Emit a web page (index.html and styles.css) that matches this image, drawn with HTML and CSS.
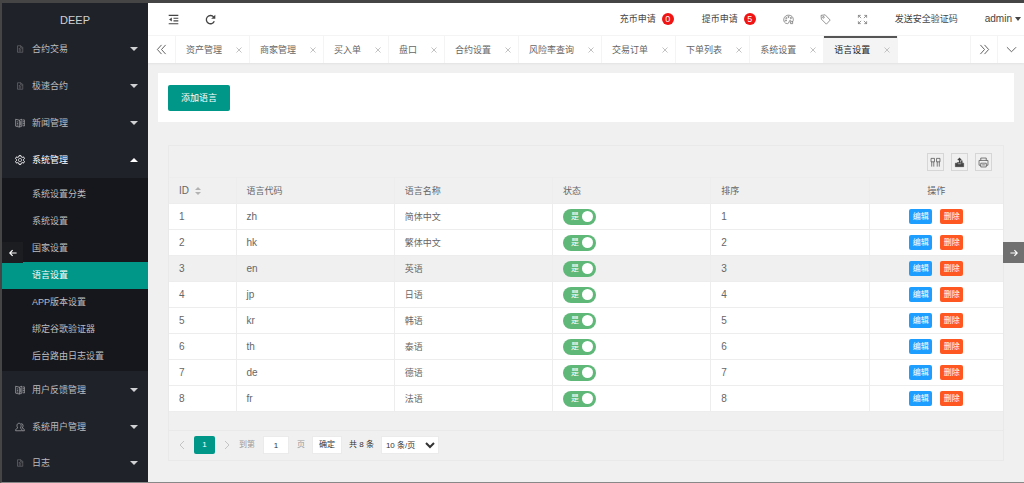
FILE: index.html
```
<!DOCTYPE html>
<html lang="zh-CN">
<head>
<meta charset="utf-8">
<title>DEEP</title>
<link rel="stylesheet" href="styles.css">
</head>
<body>
<svg class="defs" aria-hidden="true">
  <symbol id="i-file" viewBox="0 0 16 16"><path d="M3 1.500h7l3.500 3.500v9.500h-10.500zM9.500 2v4h4M5.500 7h3M5.500 9.500h5M5.500 12h5"/></symbol>
  <symbol id="i-book" viewBox="0 0 16 16"><path d="M1 2l6 1.500v11l-6-1.500zM7 3.500l4-1.500v11l-4 1.500M3 6l2 .5M3 8.500l2 .5M3 11l2 .5M9 5v7M12.500 3h2.500M12.500 6h2.500M12.500 9h2.500M12.500 12.500h2.500M15 3v10"/></symbol>
  <symbol id="i-gear" viewBox="0 0 16 16"><path stroke-width="1.500" d="M6.500 1h3l.5 2 1.700.8 1.900-.8 1.500 2.500-1.400 1.500v2l1.400 1.500-1.500 2.500-1.900-.8-1.700.8-.5 2h-3l-.5-2-1.700-.8-1.900.8-1.500-2.500 1.400-1.500v-2l-1.400-1.500 1.500-2.500 1.900.8 1.700-.8z"/><circle cx="8" cy="8" r="2.600"/></symbol>
  <symbol id="i-user" viewBox="0 0 16 16"><path d="M1 14h9.500M1 14c0-3 1.500-3.500 3.500-4.500-2-2-2-7.500 2-7.500s4 5.500 2 7.500M10 2.500c3.500 0 3.500 5 1.500 7 2 .7 3.500 1.500 3.500 4.500h-4M8.500 9.500c1.500.7 2.500 2 2.500 4.500"/></symbol>
  <symbol id="i-close" viewBox="0 0 10 10"><path d="M2.500 2.500l5 5M7.500 2.500l-5 5"/></symbol>
</svg>

<div class="app">
  <aside class="side">
    <div class="logo">DEEP</div>
    <nav>
      <a class="nav-item" href="#"><svg class="dim"><use href="#i-file"/></svg><span>合约交易</span><i class="caret"></i></a>
      <a class="nav-item" href="#"><svg class="dim"><use href="#i-file"/></svg><span>极速合约</span><i class="caret"></i></a>
      <a class="nav-item" href="#"><svg><use href="#i-book"/></svg><span>新闻管理</span><i class="caret"></i></a>
      <a class="nav-item open" href="#"><svg><use href="#i-gear"/></svg><span>系统管理</span><i class="caret up"></i></a>
      <div class="submenu">
        <a href="#">系统设置分类</a>
        <a href="#">系统设置</a>
        <a href="#">国家设置</a>
        <a href="#" class="current">语言设置</a>
        <a href="#">APP版本设置</a>
        <a href="#">绑定谷歌验证器</a>
        <a href="#">后台路由日志设置</a>
      </div>
      <a class="nav-item" href="#"><svg><use href="#i-book"/></svg><span>用户反馈管理</span><i class="caret"></i></a>
      <a class="nav-item" href="#"><svg><use href="#i-user"/></svg><span>系统用户管理</span><i class="caret"></i></a>
      <a class="nav-item" href="#"><svg class="dim"><use href="#i-file"/></svg><span>日志</span><i class="caret"></i></a>
    </nav>
  </aside>

  <div class="main">
    <header class="topbar">
      <button class="icon-btn" aria-label="收起菜单"><svg viewBox="0 0 16 16"><path d="M1 2h14M8 6.200h7M8 10h7M1 14.200h14" stroke-width="1.700"/><path d="M5.500 5v6L1.500 8z" fill="currentColor" stroke="none"/></svg></button>
      <button class="icon-btn" aria-label="刷新"><svg viewBox="0 0 16 16"><path d="M13.500 10.500a6 6 0 1 1-.8-6" stroke-width="1.900"/><path d="M15 1v6h-6z" fill="currentColor" stroke="none"/></svg></button>
      <span class="spacer"></span>
      <a class="top-link" href="#">充币申请<span class="badge">0</span></a>
      <a class="top-link" href="#">提币申请<span class="badge">5</span></a>
      <button class="icon-btn thin" aria-label="主题"><svg viewBox="0 0 16 16"><path d="M6.500 14C2 14 .5 10 1.200 7 2 3.500 5 1.500 8.500 1.700c4 .2 6.500 3 6.500 6.300 0 2-1 3.500-2 3.500-1.500 0-1-2.500-2.500-2.500-2 0-1 5-4 5z"/><path d="M11 10.500v3.500h3v-3.500"/><circle cx="4.200" cy="9.500" r=".9"/><circle cx="4.800" cy="6" r=".9"/><circle cx="8" cy="4.300" r=".9"/><circle cx="11.500" cy="5.800" r=".9"/></svg></button>
      <button class="icon-btn thin" aria-label="便签"><svg viewBox="0 0 16 16"><path d="M1.500 2l6-.8 7.300 7.600-5.500 6-7.300-7.300z"/><circle cx="5" cy="4.800" r="1.200"/></svg></button>
      <button class="icon-btn thin" aria-label="全屏"><svg viewBox="0 0 16 16"><path d="M2 5.500v-3.500h3.500M2 2l4 4M10.500 2h3.500v3.500M14 2l-4 4M2 10.500v3.500h3.500M2 14l4-4M14 10.500v3.500h-3.500M14 14l-4-4"/></svg></button>
      <a class="top-link" href="#">发送安全验证码</a>
      <a class="top-link user" href="#">admin<i class="caret"></i></a>
    </header>

    <div class="tabbar">
      <button class="tab-ctl first" aria-label="向左"><svg viewBox="0 0 12 12"><path d="M6 1L1.500 6 6 11M10.500 1L6 6l4.500 5"/></svg></button>
      <div class="tabs">
        <div class="tab"><a href="#">资产管理</a><button aria-label="关闭"><svg><use href="#i-close"/></svg></button></div>
        <div class="tab"><a href="#">商家管理</a><button aria-label="关闭"><svg><use href="#i-close"/></svg></button></div>
        <div class="tab"><a href="#">买入单</a><button aria-label="关闭"><svg><use href="#i-close"/></svg></button></div>
        <div class="tab"><a href="#">盘口</a><button aria-label="关闭"><svg><use href="#i-close"/></svg></button></div>
        <div class="tab"><a href="#">合约设置</a><button aria-label="关闭"><svg><use href="#i-close"/></svg></button></div>
        <div class="tab"><a href="#">风险率查询</a><button aria-label="关闭"><svg><use href="#i-close"/></svg></button></div>
        <div class="tab"><a href="#">交易订单</a><button aria-label="关闭"><svg><use href="#i-close"/></svg></button></div>
        <div class="tab"><a href="#">下单列表</a><button aria-label="关闭"><svg><use href="#i-close"/></svg></button></div>
        <div class="tab"><a href="#">系统设置</a><button aria-label="关闭"><svg><use href="#i-close"/></svg></button></div>
        <div class="tab active"><a href="#">语言设置</a><button aria-label="关闭"><svg><use href="#i-close"/></svg></button></div>
      </div>
      <button class="tab-ctl" aria-label="向右"><svg viewBox="0 0 12 12"><path d="M1.500 1L6 6l-4.500 5M6 1l4.500 5L6 11"/></svg></button>
      <button class="tab-ctl" aria-label="更多"><svg viewBox="0 0 12 12"><path d="M1 3.500L6 8.500l5-5"/></svg></button>
    </div>

    <main class="content">
      <section class="card"><button class="primary">添加语言</button></section>

      <section class="grid-box">
        <div class="tools">
          <button aria-label="筛选列"><svg viewBox="0 0 16 16"><path d="M1.500 2h5v5h-5zM9.500 2h5v5h-5zM2.500 7v7M5.500 7v7M10.500 7v7M13.500 7v7"/></svg></button>
          <button aria-label="导出"><svg viewBox="0 0 16 16"><path d="M2 9h3l1 1.500h4L11 9h3v5H2z" fill="currentColor"/><path d="M4.500 8.500h7V6H9.500M8 8V2.500M5.500 4.500L8 2l2.500 2.500" stroke-width="1.700"/></svg></button>
          <button aria-label="打印"><svg viewBox="0 0 16 16"><path d="M4 5V1.500h8V5M4 12H1.500V5h13v7H12M4 9h8v5.500H4zM6 11.500h4"/></svg></button>
        </div>
        <table>
          <colgroup><col class="c-id"><col><col><col><col><col class="c-op"></colgroup>
          <thead>
            <tr><th><span class="sortable">ID<span class="sort"><i class="caret up"></i><i class="caret"></i></span></span></th><th>语言代码</th><th>语言名称</th><th>状态</th><th>排序</th><th class="op">操作</th></tr>
          </thead>
          <tbody>
            <tr><td>1</td><td>zh</td><td>简体中文</td><td><label class="switch">是<input type="checkbox" checked></label></td><td>1</td><td class="op"><button class="mini">编辑</button><button class="mini del">删除</button></td></tr>
            <tr><td>2</td><td>hk</td><td>繁体中文</td><td><label class="switch">是<input type="checkbox" checked></label></td><td>2</td><td class="op"><button class="mini">编辑</button><button class="mini del">删除</button></td></tr>
            <tr class="hover"><td>3</td><td>en</td><td>英语</td><td><label class="switch">是<input type="checkbox" checked></label></td><td>3</td><td class="op"><button class="mini">编辑</button><button class="mini del">删除</button></td></tr>
            <tr><td>4</td><td>jp</td><td>日语</td><td><label class="switch">是<input type="checkbox" checked></label></td><td>4</td><td class="op"><button class="mini">编辑</button><button class="mini del">删除</button></td></tr>
            <tr><td>5</td><td>kr</td><td>韩语</td><td><label class="switch">是<input type="checkbox" checked></label></td><td>5</td><td class="op"><button class="mini">编辑</button><button class="mini del">删除</button></td></tr>
            <tr><td>6</td><td>th</td><td>泰语</td><td><label class="switch">是<input type="checkbox" checked></label></td><td>6</td><td class="op"><button class="mini">编辑</button><button class="mini del">删除</button></td></tr>
            <tr><td>7</td><td>de</td><td>德语</td><td><label class="switch">是<input type="checkbox" checked></label></td><td>7</td><td class="op"><button class="mini">编辑</button><button class="mini del">删除</button></td></tr>
            <tr><td>8</td><td>fr</td><td>法语</td><td><label class="switch">是<input type="checkbox" checked></label></td><td>8</td><td class="op"><button class="mini">编辑</button><button class="mini del">删除</button></td></tr>
          </tbody>
        </table>
        <div class="pager">
          <button class="step" aria-label="上一页"><svg viewBox="0 0 10 10"><path d="M7 1L3 5l4 4"/></svg></button>
          <button class="page">1</button>
          <button class="step" aria-label="下一页"><svg viewBox="0 0 10 10"><path d="M3 1l4 4-4 4"/></svg></button>
          <label class="jump">到第<input type="text" value="1">页</label>
          <button class="confirm">确定</button>
          <span class="total">共 8 条</span>
          <select aria-label="每页条数"><option>10 条/页</option></select>
        </div>
      </section>
    </main>
  </div>

  <button class="edge prev" aria-label="后退"><svg viewBox="0 0 10 10"><path d="M9.500 5H1M4.500 1.500L1 5l3.500 3.500"/></svg></button>
  <button class="edge next" aria-label="前进"><svg viewBox="0 0 10 10"><path d="M.5 5H9M5.500 1.500L9 5 5.500 8.500"/></svg></button>
</div>
</body>
</html>
```

FILE: styles.css
```
* { box-sizing: border-box; }

body {
  margin: 0;
  background: #f0f0f0;
  color: #666;
  font: 9px/14px "Liberation Sans", "Noto Sans CJK SC", sans-serif;
}

a { color: inherit; text-decoration: none; }

button, input, select {
  margin: 0;
  padding: 0;
  border: 0;
  background: none;
  color: inherit;
  font: inherit;
}

svg {
  display: block;
  flex: none;
  fill: none;
  stroke: currentColor;
}

.defs { position: absolute; width: 0; height: 0; }

.app {
  position: relative;
  display: flex;
  min-height: 100vh;
  border: solid #454545;
  border-width: 3px 0 1px 2px;
  border-bottom-color: #888;
}

.caret {
  flex: none;
  border: 4px solid transparent;
  border-top-color: currentColor;
  border-bottom: 0;
}

.caret.up {
  border-top: 0;
  border-bottom: 4px solid currentColor;
}

/* sidebar */
.side {
  position: relative;
  z-index: 1;
  flex: none;
  width: 146px;
  background: #20222a;
  color: #bcbdbf;
}

.logo {
  height: 27px;
  padding-top: 6px;
  color: #d0d1d3;
  font-size: 11px;
  line-height: 22px;
  text-align: center;
}

.nav-item {
  display: flex;
  align-items: center;
  gap: 7px;
  height: 37px;
  padding: 0 10px 0 13px;
}

.nav-item svg { width: 10px; height: 10px; }
.nav-item .dim { padding: 1px; color: #85868a; }
.nav-item span { flex: 1; }
.nav-item .caret { color: #d0d1d3; }
.nav-item.open, .nav-item.open .caret { color: #fff; }
.nav-item:last-child { height: 36px; }

.submenu {
  padding: 3px 0 1px;
  background: #16171d;
}

.submenu a {
  display: block;
  padding-left: 30px;
  line-height: 27px;
}

.submenu .current { background: #009688; color: #fff; }

/* top bar */
.main { flex: 1; min-width: 0; }

.topbar {
  display: flex;
  align-items: center;
  height: 33px;
  padding: 0 3px 0 7px;
  background: #fff;
  border-bottom: 1px solid #f6f6f6;
  color: #444;
}

.spacer { flex: 1; }

.icon-btn {
  display: grid;
  place-items: center;
  width: 37px;
  height: 33px;
}

.icon-btn svg { width: 11px; height: 11px; }
.icon-btn.thin { color: #666; }

.top-link {
  display: flex;
  align-items: center;
  gap: 6px;
  padding: 0 14px;
  white-space: nowrap;
}

.top-link.user {
  gap: 3px;
  padding: 0 0 0 13px;
  font-size: 10px;
}

.top-link.user .caret { border-width: 4px 3px 0; }

.badge {
  width: 12px;
  height: 12px;
  border-radius: 6px;
  background: #f01414;
  color: #fff;
  line-height: 12px;
  text-align: center;
}

/* tabs */
.tabbar {
  display: flex;
  height: 27px;
  background: #fff;
  box-shadow: 0 1px 2px #e2e2e2;
}

.tab-ctl {
  display: grid;
  place-items: center;
  width: 27px;
  border-left: 1px solid #f4f4f4;
  color: #555;
}

.tab-ctl.first { width: 28px; border: 0; border-right: 1px solid #f4f4f4; }
.tab-ctl svg { width: 11px; height: 11px; }

.tabs { display: flex; flex: 1; min-width: 0; }

.tab {
  display: flex;
  align-items: center;
  gap: 12px;
  padding: 0 5px 0 10px;
  border-right: 1px solid #f4f4f4;
  white-space: nowrap;
}

.tab svg { width: 10px; height: 10px; color: #c2c2c2; }

.tab.active {
  background: #f4f4f4;
  box-shadow: inset 0 2px #555;
  color: #222;
}

/* content */
.content { padding: 10px 10px 21px; }

.card {
  padding: 12px 10px 11px;
  background: #fff;
}

.primary {
  display: block;
  height: 26px;
  padding: 0 13px;
  border-radius: 2px;
  background: #009688;
  color: #fff;
}

.grid-box {
  margin: 23px 10px 0;
  border: 1px solid #e9e9e9;
}

.tools {
  display: flex;
  justify-content: flex-end;
  gap: 7px;
  padding: 7px 11px 6px;
}

.tools button {
  display: grid;
  place-items: center;
  width: 17px;
  height: 18px;
  border: 1px solid #d6d6d6;
  color: #444;
}

.tools svg { width: 11px; height: 11px; }

table {
  width: 100%;
  border-collapse: collapse;
  table-layout: fixed;
}

.c-id { width: 67px; }
.c-op { width: 134px; }

tbody { background: #fff; }
.hover { background: #f0f0f0; }

th, td {
  height: 26px;
  padding: 0 10px;
  border: 1px solid #ededed;
  font-weight: 400;
  text-align: left;
}

th:first-child, td:first-child { border-left: 0; }
th:last-child, td:last-child { border-right: 0; }

td:nth-child(-n+2), td:nth-child(5), .sortable { font-size: 10px; }

th.op, td.op { text-align: center; }

.sortable { display: flex; align-items: center; gap: 6px; }
.sort { display: grid; gap: 2px; color: #b2b2b2; }
.sort .caret { border-left-width: 3px; border-right-width: 3px; border-top-width: 3px; }
.sort .caret.up { border-top-width: 0; border-bottom-width: 3px; }

.switch {
  display: flex;
  align-items: center;
  justify-content: space-between;
  width: 33px;
  height: 16px;
  padding: 0 3px 0 8px;
  border-radius: 8px;
  background: #5fb878;
  color: #fff;
  font-size: 8px;
}

.switch input {
  appearance: none;
  width: 11px;
  height: 11px;
  border-radius: 50%;
  background: #fff;
}

.mini {
  width: 23px;
  height: 15px;
  border-radius: 2px;
  background: #1e9fff;
  color: #fff;
  font-size: 8px;
  line-height: 15px;
  vertical-align: middle;
}

.mini.del { margin-left: 8px; background: #ff5722; }

/* pager */
.pager {
  display: flex;
  align-items: center;
  gap: 7px;
  margin-top: 18px;
  padding: 5px 8px 6px;
  border-top: 1px solid #e9e9e9;
  color: #333;
  font-size: 8px;
}

.step { color: #c4c4c4; }
.step svg { width: 10px; height: 10px; }

.page {
  width: 21px;
  height: 18px;
  border-radius: 2px;
  background: #009688;
  color: #fff;
}

.jump {
  display: flex;
  align-items: center;
  gap: 8px;
  color: #999;
}

.jump input {
  width: 26px;
  height: 18px;
  border: 1px solid #ebebeb;
  background: #fff;
  color: #333;
  text-align: center;
}

.confirm {
  width: 30px;
  height: 18px;
  border: 1px solid #ebebeb;
  background: #fff;
}

.pager select {
  width: 58px;
  height: 18px;
  border: 1px solid #ebebeb;
  background: #fff;
}

/* floating history arrows */
.edge {
  position: absolute;
  top: 239px;
  display: grid;
  place-items: center;
  width: 21px;
  height: 21px;
  color: #fff;
}

.edge svg { width: 8px; height: 8px; stroke-width: 1.5; }
.prev { left: 0; z-index: 1; background: #1c1d21; }
.next { right: 0; background: #707070; }
```
